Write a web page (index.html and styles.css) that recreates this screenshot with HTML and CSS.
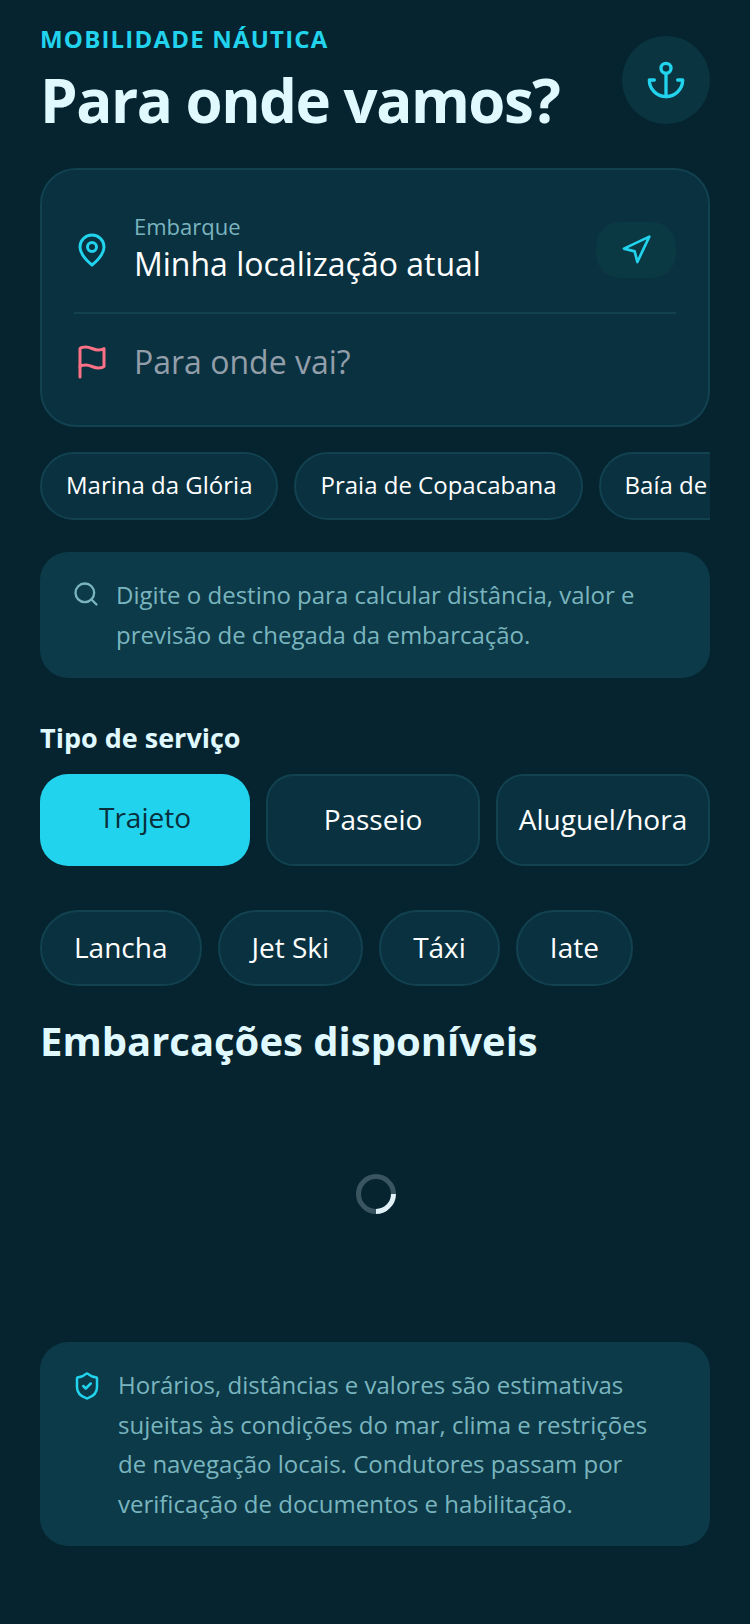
FILE: index.html
```html
<!DOCTYPE html>
<html lang="pt-BR">
<head>
<meta charset="UTF-8">
<meta name="viewport" content="width=device-width, initial-scale=1.0">
<title>Mobilidade Náutica</title>
<link rel="stylesheet" href="styles.css">
</head>
<body>
<main class="page">

  <!-- Cabeçalho -->
  <header class="top">
    <div>
      <p class="eyebrow">MOBILIDADE NÁUTICA</p>
      <h1>Para onde vamos?</h1>
    </div>
    <div class="anchor-btn">
      <svg class="icon-anchor" viewBox="0 0 24 24"><path d="M12 22V8"/><path d="M5 12H2a10 10 0 0 0 20 0h-3"/><circle cx="12" cy="5" r="3"/></svg>
    </div>
  </header>

  <!-- Origem e destino -->
  <section class="route-card">
    <div class="route-row origin">
      <svg class="icon-route cyan" viewBox="0 0 24 24"><path d="M20 10c0 6-8 12-8 12s-8-6-8-12a8 8 0 0 1 16 0Z"/><circle cx="12" cy="10" r="3"/></svg>
      <div class="route-text">
        <span class="route-label">Embarque</span>
        <span class="route-value">Minha localização atual</span>
      </div>
      <div class="locate-btn">
        <svg class="icon-locate" viewBox="0 0 24 24"><polygon points="3 11 22 2 13 21 11 13 3 11"/></svg>
      </div>
    </div>
    <div class="route-row destination">
      <svg class="icon-route pink" viewBox="0 0 24 24"><path d="M4 15s1-1 4-1 5 2 8 2 4-1 4-1V3s-1 1-4 1-5-2-8-2-4 1-4 1z"/><line x1="4" x2="4" y1="22" y2="15"/></svg>
      <span class="route-placeholder">Para onde vai?</span>
    </div>
  </section>

  <!-- Sugestões -->
  <div class="places">
    <span class="place">Marina da Glória</span>
    <span class="place">Praia de Copacabana</span>
    <span class="place">Baía de Guanabara</span>
  </div>

  <div class="note note-search">
    <svg class="icon-search" viewBox="0 0 24 24"><circle cx="11" cy="11" r="8"/><path d="m21 21-4.3-4.3"/></svg>
    <p>Digite o destino para calcular distância, valor e previsão de chegada da embarcação.</p>
  </div>

  <!-- Serviço -->
  <h2 class="service-title">Tipo de serviço</h2>
  <div class="services">
    <button class="service active">Trajeto</button>
    <button class="service">Passeio</button>
    <button class="service">Aluguel/hora</button>
  </div>

  <div class="vessels">
    <button class="vessel">Lancha</button>
    <button class="vessel">Jet Ski</button>
    <button class="vessel">Táxi</button>
    <button class="vessel">Iate</button>
  </div>

  <h2 class="list-title">Embarcações disponíveis</h2>
  <div class="loading"><div class="spinner"></div></div>

  <div class="note note-legal">
    <svg class="icon-shield" viewBox="0 0 24 24"><path d="M20 13c0 5-3.5 7.5-7.66 8.95a1 1 0 0 1-.67-.01C7.5 20.5 4 18 4 13V6a1 1 0 0 1 1-1c2 0 4.5-1.2 6.24-2.72a1.17 1.17 0 0 1 1.52 0C14.51 3.81 17 5 19 5a1 1 0 0 1 1 1z"/><path d="m9 12 2 2 4-4"/></svg>
    <p>Horários, distâncias e valores são estimativas sujeitas às condições do mar, clima e restrições de navegação locais. Condutores passam por verificação de documentos e habilitação.</p>
  </div>

</main>
</body>
</html>
```

FILE: styles.css
```css
* {
  box-sizing: border-box;
}

html, body {
  margin: 0;
  padding: 0;
  height: 100%;
}

body {
  font-family: "Open Sans", "Noto Sans", sans-serif;
  background-color: #05242f;
  color: #ffffff;
  overflow: hidden;
}

svg {
  fill: none;
  stroke: currentColor;
  stroke-width: 2;
  stroke-linecap: round;
  stroke-linejoin: round;
  flex-shrink: 0;
  display: block;
}

.page {
  padding: 20px 40px 0;
}

/* header */
.top {
  display: flex;
  justify-content: space-between;
  align-items: flex-start;
  height: 148px;
}

.eyebrow {
  margin: 0;
  font-size: 24px;
  line-height: 38px;
  font-weight: 700;
  letter-spacing: 1.2px;
  color: #22d3ee;
}

h1 {
  margin: 0;
  font-size: 60px;
  line-height: 84px;
  font-weight: 700;
  letter-spacing: -1.5px;
  color: #e0f9ff;
}

.anchor-btn {
  width: 88px;
  height: 88px;
  margin-top: 16px;
  border-radius: 50%;
  background-color: #0a3540;
  color: #22d3ee;
  display: flex;
  align-items: center;
  justify-content: center;
}

.icon-anchor {
  width: 40px;
  height: 40px;
}

/* route card */
.route-card {
  height: 259px;
  padding: 0 32px;
  background-color: #0a3140;
  border: 2px solid #124150;
  border-radius: 36px;
}

.route-row {
  display: flex;
  align-items: center;
  gap: 24px;
}

.origin {
  height: 144px;
  padding-top: 17px;
  border-bottom: 2px solid #14414f;
}

.destination {
  height: 95px;
}

.icon-route {
  width: 36px;
  height: 36px;
}

.cyan {
  color: #22d3ee;
}

.pink {
  color: #fb7185;
}

.route-text {
  flex: 1;
  display: flex;
  flex-direction: column;
  margin-top: -4px;
}

.route-label {
  font-size: 22px;
  line-height: 32px;
  color: #7ab5bf;
}

.route-value {
  font-size: 32px;
  line-height: 44px;
}

.route-placeholder {
  font-size: 32px;
  line-height: 44px;
  color: #929ea9;
}

.locate-btn {
  width: 80px;
  height: 56px;
  border-radius: 24px;
  background-color: #0a3843;
  color: #22d3ee;
  display: flex;
  align-items: center;
  justify-content: center;
}

.icon-locate {
  width: 32px;
  height: 32px;
}

/* places */
.places {
  display: flex;
  gap: 16px;
  margin-top: 25px;
  overflow: hidden;
}

.place {
  flex-shrink: 0;
  height: 68px;
  padding: 0 24px 3px;
  display: flex;
  align-items: center;
  font-size: 24px;
  background-color: #0a3140;
  border: 2px solid #124150;
  border-radius: 34px;
  white-space: nowrap;
}

/* notes */
.note {
  display: flex;
  align-items: flex-start;
  padding: 0 32px;
  background-color: #0c3a48;
  border-radius: 28px;
  color: #7ab5bf;
  font-size: 24px;
}

.note p {
  margin: 0;
}

.note-search {
  height: 126px;
  margin-top: 32px;
  padding-top: 23px;
  gap: 16px;
}

.note-search p {
  line-height: 40px;
}

.icon-search {
  width: 28px;
  height: 28px;
  margin-top: 5px;
}

.note-legal {
  height: 204px;
  margin-top: 128px;
  padding-top: 23px;
  gap: 16px;
}

.note-legal p {
  line-height: 39.5px;
}

.icon-shield {
  width: 30px;
  height: 30px;
  margin-top: 6px;
  color: #22d3ee;
}

/* service */
.service-title {
  margin: 42px 0 0;
  font-size: 27px;
  line-height: 36px;
  font-weight: 700;
  color: #e0f9ff;
}

.services {
  display: flex;
  gap: 16px;
  margin-top: 18px;
}

button {
  font-family: inherit;
  color: #ffffff;
  padding: 0;
}

.service {
  flex: 1;
  height: 92px;
  padding-bottom: 2px;
  font-size: 28px;
  background-color: #0a3140;
  border: 2px solid #124150;
  border-radius: 28px;
}

.service.active {
  background-color: #22d3ee;
  border: none;
  padding-bottom: 6px;
  color: #082f3a;
}

.vessels {
  display: flex;
  gap: 16px;
  margin-top: 44px;
}

.vessel {
  height: 76px;
  padding: 0 32px 3px;
  font-size: 28px;
  background-color: #0a3140;
  border: 2px solid #124150;
  border-radius: 38px;
}

.list-title {
  margin: 30px 0 0;
  font-size: 40px;
  line-height: 50px;
  font-weight: 700;
  color: #e0f9ff;
}

/* loading */
.loading {
  display: flex;
  justify-content: center;
  padding-top: 108px;
  padding-left: 2px;
  height: 148px;
}

.spinner {
  width: 40px;
  height: 40px;
  border: 5px solid #3a5560;
  border-right-color: #e0f2f7;
  border-radius: 50%;
  transform: rotate(45deg);
}
```
